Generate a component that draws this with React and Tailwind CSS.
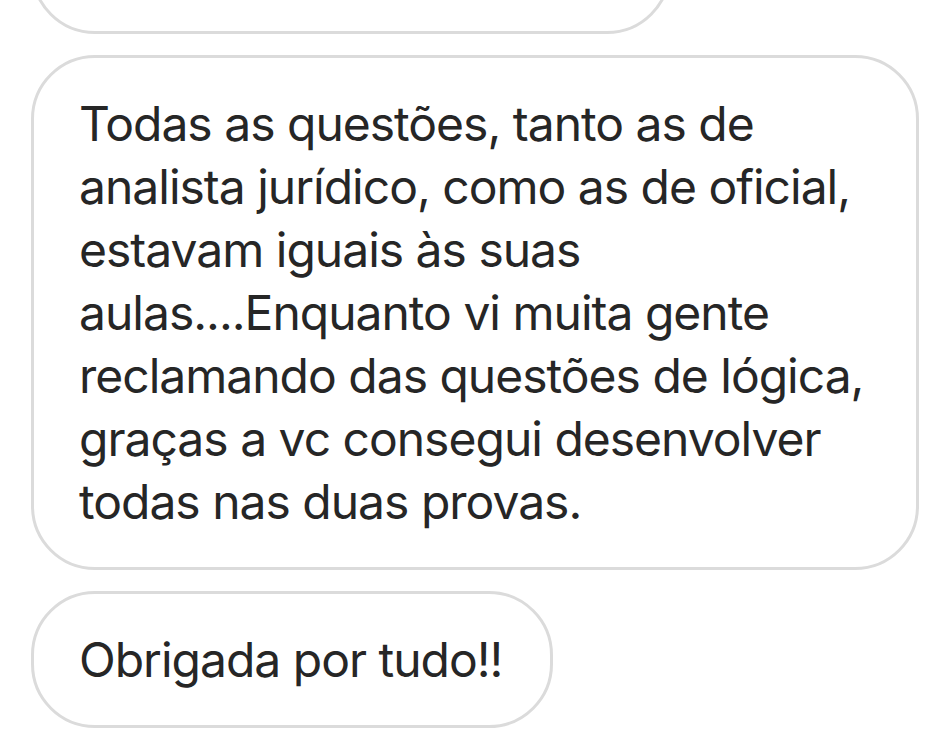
import React from 'react';

const messages = [
  { id: 1, text: 'Até a próxima!', width: 'w-[640px]', clip: true },
  {
    id: 2,
    text:
      'Todas as questões, tanto as de analista jurídico, como as de oficial, estavam iguais às suas aulas....Enquanto vi muita gente reclamando das questões de lógica, graças a vc consegui desenvolver todas nas duas provas.',
    width: 'w-[888px]',
  },
  { id: 3, text: 'Obrigada por tudo!!', width: 'w-[522px]' },
];

const Bubble = ({ text, width, clip }) => (
  <div
    className={`${width} ${clip ? 'mt-[-101px] h-[135px]' : ''} rounded-[64px] border-[3px] border-[#dbdbdb] bg-white px-[45px] py-[34px]`}
  >
    <p className={`text-[48px] leading-[63px] tracking-[-1px] text-[#262626] ${clip ? 'invisible' : ''}`}>{text}</p>
  </div>
);

const App = () => {
  return (
    <div
      className="h-[743px] w-[942px] overflow-hidden bg-white"
      style={{ fontFamily: 'Inter, "Noto Sans", sans-serif' }}
    >
      {/* Lista de mensagens */}
      <div className="flex flex-col gap-[21px] pl-[31px]">
        {messages.map((m) => (
          <Bubble key={m.id} text={m.text} width={m.width} clip={m.clip} />
        ))}
      </div>
    </div>
  );
};

export default App;
